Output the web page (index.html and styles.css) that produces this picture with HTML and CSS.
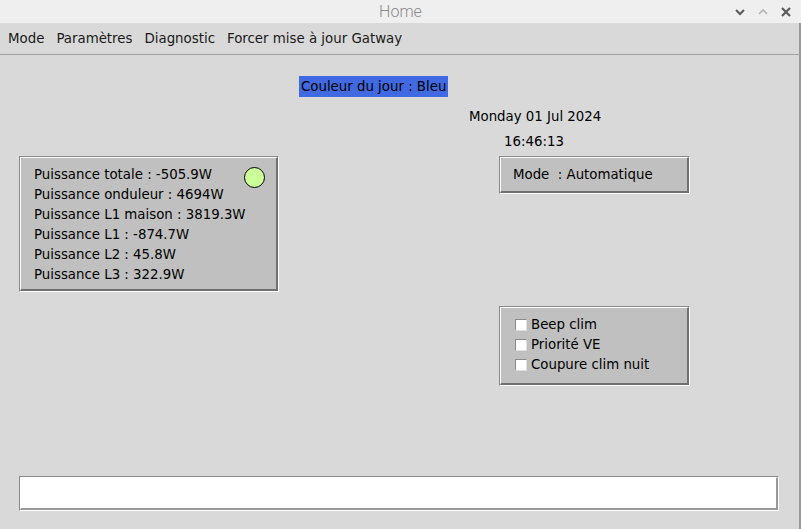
FILE: index.html
```html
<!DOCTYPE html>
<html lang="fr">
<head>
<meta charset="utf-8">
<title>Home</title>
<link rel="stylesheet" href="styles.css">
</head>
<body>
<div class="window">
  <header class="titlebar">
    <span class="title-spacer"></span>
    <span class="title">Home</span>
    <span class="controls">
      <svg class="ctl" width="12" height="10" viewBox="0 0 12 10"><path d="M2 3 L6 7 L10 3" fill="none" stroke="#5a5a5a" stroke-width="2"/></svg>
      <svg class="ctl" width="12" height="10" viewBox="0 0 12 10"><path d="M2 7 L6 3 L10 7" fill="none" stroke="#b4b4b4" stroke-width="1.6"/></svg>
      <svg class="ctl" width="12" height="12" viewBox="0 0 12 12"><path d="M2 2 L10 10 M10 2 L2 10" fill="none" stroke="#5a5a5a" stroke-width="2.2"/></svg>
    </span>
  </header>
  <nav class="menubar">
    <span class="menu-item">Mode</span>
    <span class="menu-item">Paramètres</span>
    <span class="menu-item">Diagnostic</span>
    <span class="menu-item">Forcer mise à jour Gatway</span>
  </nav>
  <main class="content">
    <div class="day-row"><span class="day-label">Couleur du jour : Bleu</span></div>
    <div class="date">Monday 01 Jul 2024</div>
    <div class="time">16:46:13</div>
    <div class="panels">
      <section class="groove power">
        <div class="groove-inner power-inner">
          <div class="line first">
            <span>Puissance totale : -505.9W</span>
            <span class="led"></span>
          </div>
          <div class="line">Puissance onduleur : 4694W</div>
          <div class="line">Puissance L1 maison : 3819.3W</div>
          <div class="line">Puissance L1 : -874.7W</div>
          <div class="line">Puissance L2 : 45.8W</div>
          <div class="line">Puissance L3 : 322.9W</div>
        </div>
      </section>
      <div class="right-col">
        <section class="groove mode">
          <div class="groove-inner mode-inner">Mode&nbsp; : Automatique</div>
        </section>
        <section class="groove checks">
          <div class="groove-inner checks-inner">
            <label class="check"><span class="box"></span>Beep clim</label>
            <label class="check"><span class="box"></span>Priorité VE</label>
            <label class="check"><span class="box"></span>Coupure clim nuit</label>
          </div>
        </section>
      </div>
    </div>
    <div class="groove entry"><div class="groove-inner entry-inner"></div></div>
  </main>
</div>
</body>
</html>
```
FILE: styles.css
```css
html, body {
  margin: 0;
  padding: 0;
}
body {
  width: 801px;
  height: 529px;
  overflow: hidden;
  background: #d9d9d9;
  font-family: "DejaVu Sans", sans-serif;
  font-size: 13.33px;
  color: #000;
}
.window {
  width: 801px;
  height: 529px;
  display: flex;
  flex-direction: column;
}
.titlebar {
  height: 23px;
  flex: none;
  background: #efefef;
  display: grid;
  grid-template-columns: 1fr auto 1fr;
  align-items: center;
}
.title {
  font-family: Roboto, sans-serif;
  font-weight: 300;
  font-size: 16px;
  color: #8a8a8a;
  line-height: 22px;
}
.controls {
  justify-self: end;
  display: flex;
  align-items: center;
  gap: 11px;
  padding-right: 9px;
}
.ctl { display: block; }
.menubar {
  height: 32px;
  flex: none;
  display: flex;
  align-items: center;
  gap: 12px;
  padding-left: 8px;
  padding-bottom: 2px;
  box-sizing: border-box;
  border-bottom: 1px solid #a0a0a0;
  border-right: 2px solid #9a9a9a;
  font-family: "DejaVu Sans Condensed", "DejaVu Sans", sans-serif;
  font-stretch: condensed;
  font-size: 14.85px;
  color: #1a1a1a;
}
.content {
  flex: 1;
  border-right: 2px solid #9a9a9a;
}
.day-row {
  padding: 21px 0 0 299px;
  height: 21px;
}
.day-label {
  display: inline-block;
  height: 21px;
  line-height: 21px;
  padding: 0 2px;
  background: #4169e1;
}
.date {
  margin: 10px 0 0 469px;
  height: 20px;
  line-height: 20px;
}
.time {
  margin: 5px 0 0 504px;
  height: 20px;
  line-height: 20px;
}
.panels {
  margin-top: 4px;
  display: flex;
  align-items: flex-start;
}
.groove {
  box-sizing: border-box;
  border: 1px solid;
  border-color: #8a8a8a #fff #fff #8a8a8a;
}
.groove-inner {
  box-sizing: border-box;
  height: 100%;
  background: #c0c0c0;
  border-style: solid;
  border-width: 1px 2px 2px 1px;
  border-color: #fff #707070 #707070 #fff;
}
.power {
  margin-left: 19px;
  width: 260px;
  height: 136px;
}
.power-inner {
  padding: 7px 0 0 13px;
}
.line {
  height: 20px;
  line-height: 20px;
}
.line.first {
  display: flex;
  justify-content: space-between;
  align-items: center;
  padding-right: 11px;
}
.led {
  width: 19px;
  height: 19px;
  margin-top: 4px;
  border: 1px solid #000;
  border-radius: 50%;
  background: #ccff99;
}
.right-col {
  margin-left: 220px;
  width: 191px;
  display: flex;
  flex-direction: column;
}
.mode {
  height: 38px;
}
.mode-inner {
  padding: 1px 0 0 12px;
  line-height: 32px;
}
.checks {
  margin-top: 112px;
  height: 80px;
}
.checks-inner {
  padding: 7px 0 0 14px;
}
.check {
  display: flex;
  align-items: center;
  height: 20px;
  line-height: 20px;
}
.box {
  box-sizing: border-box;
  width: 12px;
  height: 12px;
  margin-right: 4px;
  background: #fff;
  border: 1px solid;
  border-color: #8a8a8a #e0e0e0 #e0e0e0 #8a8a8a;
}
.entry {
  margin: 90px 0 0 19px;
  width: 760px;
  height: 35px;
}
.entry-inner {
  background: #fff;
  border-color: #fff #999 #999 #fff;
}
```
